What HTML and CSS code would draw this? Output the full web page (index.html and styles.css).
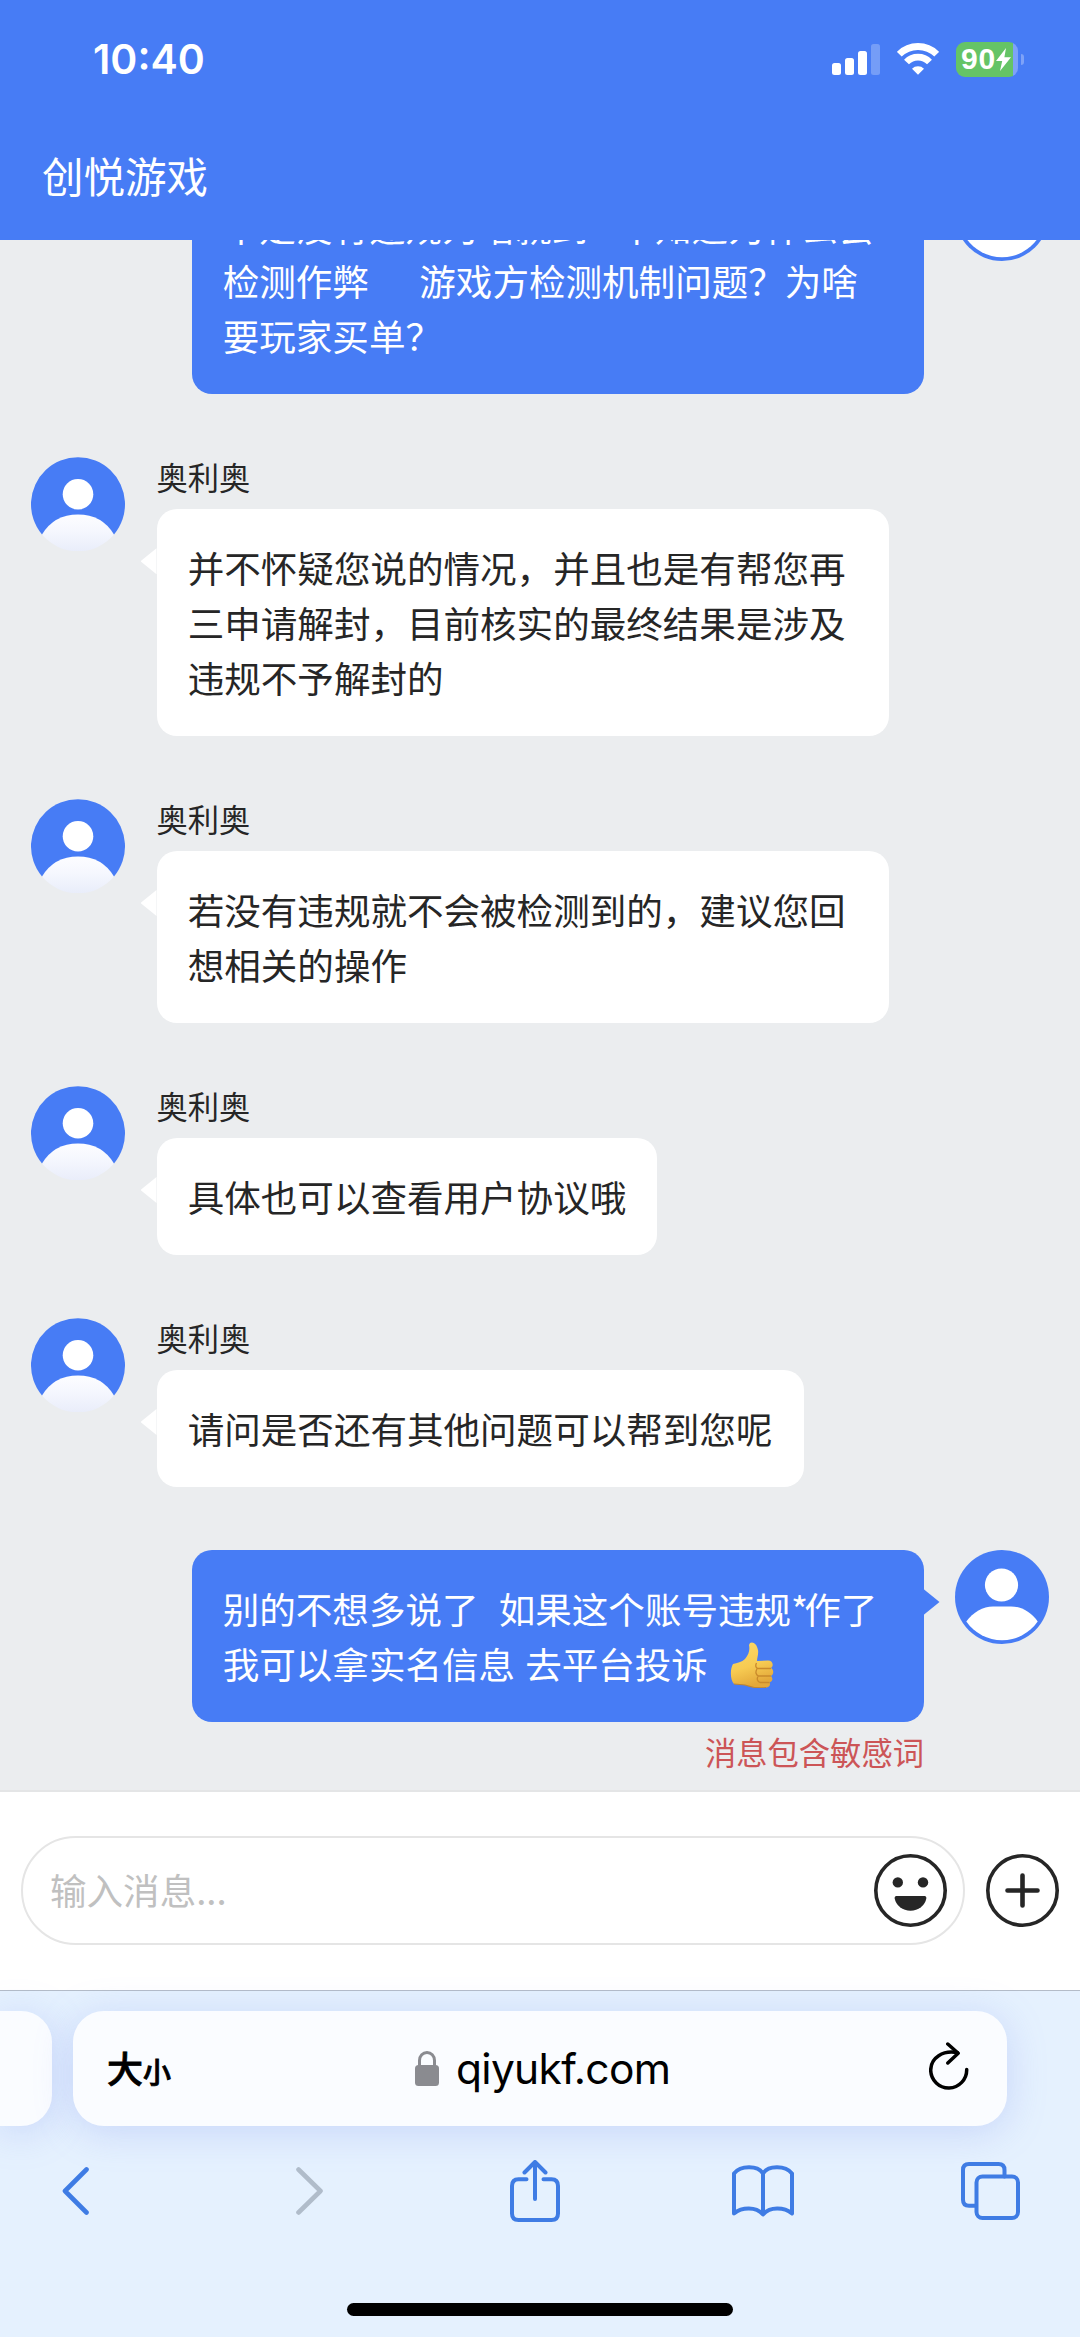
FILE: index.html
```html
<!DOCTYPE html>
<html lang="zh-CN">
<head>
<meta charset="utf-8">
<title>创悦游戏</title>
<link rel="stylesheet" href="styles.css">
</head>
<body>
<svg width="0" height="0" class="defs" aria-hidden="true">
  <defs>
    <linearGradient id="body-fade" x1="0" y1="0" x2="0" y2="1">
      <stop offset="0" stop-color="#fdfdff"/>
      <stop offset="0.45" stop-color="#f5f7fe"/>
      <stop offset="1" stop-color="#e9edfa"/>
    </linearGradient>
    <linearGradient id="hand" x1="0" y1="0" x2="0.3" y2="1">
      <stop offset="0" stop-color="#fbd96a"/>
      <stop offset="0.6" stop-color="#f7cb52"/>
      <stop offset="1" stop-color="#e3a83a"/>
    </linearGradient>
    <symbol id="agent" viewBox="0 0 94 94">
      <path d="M11 77.500A47 47 0 1 1 83 77.500Z" fill="#477cf5"/>
      <circle cx="47" cy="37.300" r="15.300" fill="#fff"/>
      <path d="M11 77.500Q23 57.500 47 57.500T83 77.500A47 47 0 0 1 11 77.500Z" fill="url(#body-fade)"/>
    </symbol>
    <symbol id="visitor" viewBox="0 0 94 94">
      <circle cx="47" cy="47" r="47" fill="#477cf5"/>
      <circle cx="46.500" cy="35" r="16.600" fill="#fff"/>
      <path d="M11.300 71.500C18 62 28 56.400 38 56.400H56C66 56.400 76 62 82.700 71.500A43.400 43.400 0 0 1 11.300 71.500Z" fill="#fff"/>
    </symbol>
  </defs>
</svg>
<div class="screen">
  <header class="top">
    <div class="status">
      <span class="clock">10:40</span>
      <svg class="signal" width="48" height="31" viewBox="0 0 48 31" fill="#fff">
        <rect x="0" y="19" width="9" height="12" rx="2.500"/>
        <rect x="13" y="14" width="9" height="17" rx="2.500"/>
        <rect x="26" y="7" width="9" height="24" rx="2.500"/>
        <rect x="39" y="0" width="9" height="31" rx="2.500" opacity=".25"/>
      </svg>
      <svg class="wifi" width="42" height="32" viewBox="0 0 42 32" fill="none" stroke="#fff" stroke-width="6.800">
        <path d="M2.300 11.200A26.500 26.500 0 0 1 39.700 11.200"/>
        <path d="M9.500 19A16 16 0 0 1 32.500 19"/>
        <path d="M15 25.700A8.500 8.500 0 0 1 27 25.700L21 31.700Z" fill="#fff" stroke="none"/>
      </svg>
      <div class="battery"><span>90</span>
        <svg width="15" height="23" viewBox="0 0 15 23"><path d="M10 0L0 13H6.200L4 23L15 9.200H8.400Z" fill="#fff"/></svg>
      </div>
      <i class="nub"></i>
    </div>
    <h1 class="title">创悦游戏</h1>
  </header>

  <main class="chat">
    <div class="msg mine">
      <div class="bubble">不是没有违规为啥就到   不知道为什么会
检测作弊     游戏方检测机制问题？为啥
要玩家买单？</div>
      <svg class="avatar"><use href="#visitor"/></svg>
    </div>
    <div class="msg">
      <svg class="avatar"><use href="#agent"/></svg>
      <div class="col">
        <div class="name">奥利奥</div>
        <div class="bubble wide">并不怀疑您说的情况，并且也是有帮您再
三申请解封，目前核实的最终结果是涉及
违规不予解封的</div>
      </div>
    </div>
    <div class="msg">
      <svg class="avatar"><use href="#agent"/></svg>
      <div class="col">
        <div class="name">奥利奥</div>
        <div class="bubble wide">若没有违规就不会被检测到的，建议您回
想相关的操作</div>
      </div>
    </div>
    <div class="msg">
      <svg class="avatar"><use href="#agent"/></svg>
      <div class="col">
        <div class="name">奥利奥</div>
        <div class="bubble">具体也可以查看用户协议哦</div>
      </div>
    </div>
    <div class="msg">
      <svg class="avatar"><use href="#agent"/></svg>
      <div class="col">
        <div class="name">奥利奥</div>
        <div class="bubble">请问是否还有其他问题可以帮到您呢</div>
      </div>
    </div>
    <div class="msg mine">
      <div class="bubble">别的不想多说了  如果这个账号违规<span class="star">*</span>作了
我可以拿实名信息 去平台投诉<svg class="thumb" width="44" height="46" viewBox="0 0 44 46">
<path d="M20 1C23-1 27 2 28 8C28.700 12 27 16 27 19L38 18.500C43 18.500 44 24 41 26C44 28 44 32 41 34C43 36 43 39 39.500 40.500C41 43 39 45 36 45.500C29 46.500 22 45.500 15 43L4 42C0 38 0 27 3 22C7 21 12 20 15 17C19 12 20 8 19 3Z" fill="url(#hand)"/>
<path d="M26.500 21C25 24 26 26 28 26.500H41M27 27C25 30 26 33 28.500 34H41M28 34.500C26.500 37 27.500 39.500 30 40.500H39.500" fill="none" stroke="#c98a2b" stroke-width="1.300"/>
<path d="M4 42L15 43C22 45.500 29 46.500 36 45.500" fill="none" stroke="#bd8433" stroke-width="1.200"/>
</svg></div>
      <svg class="avatar"><use href="#visitor"/></svg>
    </div>
    <div class="error">消息包含敏感词</div>
  </main>

  <section class="composer">
    <div class="field">
      <span class="hint">输入消息...</span>
      <svg width="73" height="73" viewBox="0 0 73 73">
        <circle cx="36.500" cy="36.500" r="34.700" fill="none" stroke="#262626" stroke-width="3.600"/>
        <circle cx="23.800" cy="28.400" r="5.200" fill="#262626"/>
        <circle cx="49" cy="28.400" r="5.200" fill="#262626"/>
        <path d="M22.500 42H50.500Q52.700 42 52.300 44.500A16 14.500 0 0 1 20.700 44.500Q20.300 42 22.500 42Z" fill="#262626"/>
      </svg>
    </div>
    <svg width="73" height="73" viewBox="0 0 73 73" fill="none" stroke="#262626" stroke-linecap="round">
      <circle cx="36.500" cy="36.500" r="34.700" stroke-width="3.600"/>
      <path d="M21.500 36.500H51.500M36.500 21.500V51.500" stroke-width="4.600"/>
    </svg>
  </section>

  <footer class="browser">
    <div class="tabs">
      <div class="tab prev"></div>
      <div class="tab current">
        <span class="aa"><b>大</b><small>小</small></span>
        <div class="host">
          <svg width="24" height="35" viewBox="0 0 24 35">
            <path d="M4.500 16V9.500a7.500 8 0 0 1 15 0V16" fill="none" stroke="#8a8b90" stroke-width="3"/>
            <rect y="14" width="24" height="21" rx="3.500" fill="#8a8b90"/>
          </svg>
          <span>qiyukf.com</span>
        </div>
        <svg class="reload" width="40" height="48" viewBox="0 0 40 48" fill="none" stroke="#000" stroke-width="3.500" stroke-linecap="round" stroke-linejoin="round">
          <path d="M28.500 10.700C14 8 1.700 15.500 1.700 28.300A18 18 0 0 0 37.700 27.500"/>
          <path d="M18.800 2L29.200 11.200L18.800 21"/>
        </svg>
      </div>
    </div>
    <nav class="tools">
      <svg width="28" height="48" viewBox="0 0 28 48"><path d="M24.500 2.500L3 24L24.500 45.500"/></svg>
      <svg class="off" width="28" height="48" viewBox="0 0 28 48"><path d="M2.500 2.500L24.500 24L2.500 45.500"/></svg>
      <svg width="50" height="62" viewBox="0 0 50 62" class="fine">
        <path d="M16.500 19.300H8.500Q2 19.300 2 26V53.500Q2 60 8.500 60H41.500Q48 60 48 53.500V26Q48 19.300 41.500 19.300H33.500"/>
        <path d="M25 39V2.500M14.500 12.500L25 2L35.500 12.500"/>
      </svg>
      <svg width="62" height="52" viewBox="0 0 62 52" class="fine">
        <path d="M31 8.500C26 .5 9 0 2 8.500V48.500C10 42 24 41.500 31 49.500C38 41.500 52 42 60 48.500V8.500C53 0 36 .5 31 8.500V49"/>
      </svg>
      <svg width="59" height="58" viewBox="0 0 59 58" class="fine">
        <path d="M14 43.700H8Q2 43.700 2 37.700V8Q2 2 8 2H37.500Q43.500 2 43.500 8V14.500"/>
        <rect x="15.500" y="14.500" width="41.500" height="41.500" rx="6"/>
      </svg>
    </nav>
    <div class="home"></div>
  </footer>
</div>
</body>
</html>
```

FILE: styles.css
```css
* { box-sizing: border-box; }

body {
  margin: 0;
  font-family: "Noto Sans CJK SC", sans-serif;
  color: #262626;
}

.defs { position: absolute; }
svg { display: block; flex: none; }

.screen {
  width: 1080px;
  height: 2337px;
  display: flex;
  flex-direction: column;
  overflow: hidden;
  background: #ebedef;
}

/* status bar and page title */
.top {
  height: 240px;
  flex: none;
  background: #477cf5;
  color: #fff;
}

.status {
  height: 118px;
  padding: 0 56px 0 93px;
  display: flex;
  align-items: center;
}

.clock {
  flex: 1;
  font: 600 41px/60px Inter, sans-serif;
}

.wifi { margin: 0 17px; }

.battery {
  width: 62px;
  height: 35px;
  border-radius: 9px;
  display: flex;
  align-items: center;
  padding-left: 5px;
  background: linear-gradient(90deg, #65c466 57px, #7ea2f8 57px);
  font: 700 30px/34px "Liberation Sans", sans-serif;
  letter-spacing: .7px;
}

.nub {
  width: 3px;
  height: 11px;
  margin-left: 3px;
  border-radius: 0 3px 3px 0;
  background: #7ea2f8;
}

.title {
  margin: 0;
  padding: 27px 42px;
  font-size: 41.500px;
  line-height: 60px;
  font-weight: 400;
}

/* conversation */
.chat {
  flex: none;
  height: 1549.500px;
  display: flex;
  flex-direction: column;
  justify-content: flex-end;
  padding: 0 31px 14.500px;
  overflow: hidden;
}

.msg {
  flex: none;
  display: flex;
  align-items: flex-start;
  gap: 31.500px;
  margin-top: 62.800px;
}

.msg.mine { justify-content: flex-end; }

.avatar { width: 94px; height: 94px; }

.name {
  height: 52.200px;
  font-size: 31.300px;
  line-height: 39px;
}

.bubble {
  position: relative;
  width: fit-content;
  padding: 32.200px 31.200px 30.200px;
  border-radius: 20px;
  background: #fff;
  font-size: 36.550px;
  line-height: 54.800px;
  white-space: pre;
  word-spacing: 1.900px;
}

.bubble.wide { width: 732px; }

.mine .bubble {
  width: 732px;
  background: #477cf5;
  color: #fff;
}

/* speech pointer */
.bubble::before {
  content: "";
  position: absolute;
  top: 39px;
  right: 100%;
  width: 16px;
  height: 26px;
  background: inherit;
  clip-path: polygon(100% 0, 100% 100%, 0 50%);
}

.mine .bubble::before {
  right: auto;
  left: 100%;
  clip-path: polygon(0 0, 0 100%, 100% 50%);
}

.star { letter-spacing: -4px; }

.thumb {
  display: inline-block;
  height: 46px;
  margin: -10px 0 0 22px;
  vertical-align: -9px;
}

.error {
  flex: none;
  margin: 6px 125px 0 0;
  font-size: 31.300px;
  line-height: 47px;
  text-align: right;
  color: #cc5557;
}

/* message input */
.composer {
  flex: none;
  height: 201px;
  display: flex;
  align-items: center;
  gap: 21px;
  padding: 0 21px;
  border-top: 2.500px solid #e4e5e6;
  border-bottom: 1px solid #b4bcc8;
  background: #fff;
}

.field {
  flex: 1;
  height: 109px;
  display: flex;
  align-items: center;
  justify-content: space-between;
  padding: 0 16px 0 27px;
  border: 2.500px solid #e5e5e5;
  border-radius: 55px;
  font-size: 36.550px;
  color: #c0c0c0;
}

.hint { padding-bottom: 3px; }

/* browser chrome */
.browser {
  flex: 1;
  display: flex;
  flex-direction: column;
  background: #e5f1fe;
}

.tabs {
  display: flex;
  gap: 21px;
  padding: 20.500px 73px 0 0;
}

.tab {
  height: 115px;
  border-radius: 31px;
  background: #fafcff;
  box-shadow: 0 6px 38px rgba(120, 140, 235, .27);
}

.prev {
  width: 52px;
  border-radius: 0 31px 31px 0;
}

.current {
  flex: 1;
  display: flex;
  align-items: center;
  padding: 0 38px 0 34px;
  color: #000;
}

.aa {
  width: 308px;
  display: flex;
  align-items: baseline;
  line-height: 60px;
}

.aa b { font-size: 36px; font-weight: 500; -webkit-text-stroke: .8px #000; }
.aa small { font-size: 28px; font-weight: 500; -webkit-text-stroke: .8px #000; }

.host {
  flex: 1;
  display: flex;
  align-items: center;
  gap: 17px;
  font: 400 42.500px/60px Inter, sans-serif;
  letter-spacing: -.7px;
}

.reload { margin-bottom: 5px; }

.tools {
  display: grid;
  grid-template-columns: 234.500px 213.700px 222px 229.500px 60px;
  align-items: center;
  height: 130px;
  padding-left: 61.500px;
}

.tools svg {
  fill: none;
  stroke: #3f7ce4;
  stroke-width: 4.600;
  stroke-linecap: round;
  stroke-linejoin: round;
}

.tools .fine { stroke-width: 4; }
.tools .off { stroke: #b0bcca; }

.home {
  width: 386px;
  height: 13px;
  margin: 47px auto 0;
  border-radius: 7px;
  background: #000;
}
```
